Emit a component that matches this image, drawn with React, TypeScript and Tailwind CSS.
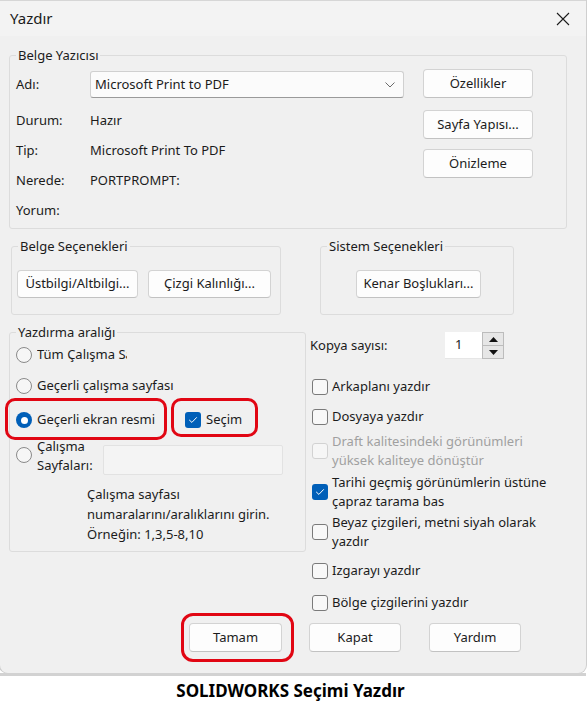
import React from "react";

function Btn({ children, className = "" }: { children: React.ReactNode; className?: string }) {
  return (
    <div
      className={
        "flex items-center justify-center rounded-[4px] border border-[#d3d3d3] border-b-[#c2c2c2] bg-[#fdfdfd] text-[13px] text-[#1b1b1b] " +
        className
      }
    >
      {children}
    </div>
  );
}

function Radio({ on = false }: { on?: boolean }) {
  if (on) {
    return (
      <span className="flex h-4 w-4 shrink-0 items-center justify-center rounded-full bg-[#005fb8]">
        <span className="h-[7px] w-[7px] rounded-full bg-white" />
      </span>
    );
  }
  return <span className="block h-4 w-4 shrink-0 rounded-full border border-[#8a8a8a] bg-[#f6f6f6]" />;
}

function Check({ on = false, disabled = false }: { on?: boolean; disabled?: boolean }) {
  if (on) {
    return (
      <span className="flex h-4 w-4 shrink-0 items-center justify-center rounded-[3px] bg-[#005fb8]">
        <svg width="10" height="8" viewBox="0 0 10 8" fill="none">
          <path d="M1.5 4.2 L3.9 6.4 L8.5 1.6" stroke="white" strokeWidth="1" strokeLinecap="round" strokeLinejoin="round" />
        </svg>
      </span>
    );
  }
  return (
    <span
      className={
        "block h-4 w-4 shrink-0 rounded-[3px] border " +
        (disabled ? "border-[#d2d2d2] bg-[#f6f6f6]" : "border-[#7a7a7a] bg-[#f8f8f8]")
      }
    />
  );
}

function Legend({ children }: { children: React.ReactNode }) {
  return <legend className="ml-[6px] px-[2px] text-[13px] leading-[18px] text-[#1b1b1b]">{children}</legend>;
}

export default function App() {
  return (
    <div className="flex h-[706px] w-[587px] flex-col overflow-hidden bg-white font-['Noto_Sans',sans-serif] text-[13px] text-[#1b1b1b]">
      <div className="flex h-[673px] w-[586px] shrink-0 flex-col rounded-b-[8px] bg-[#f0f0f0] shadow-[0_0_0_1px_#cfcfcf]">
        {/* Title bar */}
        <div className="flex h-[36px] shrink-0 items-center justify-between border-t border-[#d6d6d6] bg-[#f3f3f3] pl-[10px] pr-[16px]">
          <span className="text-[15px] text-[#1b1b1b]">Yazdır</span>
          <svg width="14" height="14" viewBox="0 0 14 14">
            <path d="M1 1 L13 13 M13 1 L1 13" stroke="#1b1b1b" strokeWidth="1.1" />
          </svg>
        </div>

        {/* Belge Yazıcısı */}
        <fieldset className="ml-[9px] mt-[10px] h-[183px] w-[558px] shrink-0 rounded-[3px] border border-[#dcdcdc]">
          <Legend>Belge Yazıcısı</Legend>
          <div className="flex pl-[6px]">
            <div className="flex w-[388px] flex-col">
              <div className="mt-[7px] flex h-[27px] items-center">
                <span className="w-[74px]">Adı:</span>
                <div className="flex h-[27px] w-[314px] items-center justify-between rounded-[3px] border border-[#d0d0d0] border-b-[#9a9a9a] bg-[#fbfbfb] pl-[4px] pr-[8px]">
                  <span>Microsoft Print to PDF</span>
                  <svg width="10" height="6" viewBox="0 0 10 6" fill="none">
                    <path d="M0.5 0.5 L5 5 L9.5 0.5" stroke="#6b6b6b" strokeWidth="1" />
                  </svg>
                </div>
              </div>
              <div className="mt-[8px] flex h-[30px] items-center">
                <span className="w-[74px]">Durum:</span>
                <span>Hazır</span>
              </div>
              <div className="flex h-[30px] items-center">
                <span className="w-[74px]">Tip:</span>
                <span>Microsoft Print To PDF</span>
              </div>
              <div className="flex h-[30px] items-center">
                <span className="w-[74px]">Nerede:</span>
                <span>PORTPROMPT:</span>
              </div>
              <div className="flex h-[30px] items-center">
                <span className="w-[74px]">Yorum:</span>
              </div>
            </div>
            <div className="ml-[19px] flex flex-col">
              <Btn className="mt-[5px] h-[29px] w-[110px]">Özellikler</Btn>
              <Btn className="mt-[12px] h-[29px] w-[110px]">Sayfa Yapısı...</Btn>
              <Btn className="mt-[10px] h-[29px] w-[110px]">Önizleme</Btn>
            </div>
          </div>
        </fieldset>

        {/* Options row */}
        <div className="mt-[8px] flex shrink-0">
          <fieldset className="ml-[11px] h-[78px] w-[270px] rounded-[3px] border border-[#dcdcdc]">
            <Legend>Belge Seçenekleri</Legend>
            <div className="mt-[15px] flex gap-[10px] pl-[5px]">
              <Btn className="h-[28px] w-[121px]">Üstbilgi/Altbilgi...</Btn>
              <Btn className="h-[28px] w-[123px]">Çizgi Kalınlığı...</Btn>
            </div>
          </fieldset>
          <fieldset className="ml-[39px] h-[78px] w-[194px] rounded-[3px] border border-[#dcdcdc]">
            <Legend>Sistem Seçenekleri</Legend>
            <div className="mt-[15px] flex pl-[35px]">
              <Btn className="h-[28px] w-[125px]">Kenar Boşlukları...</Btn>
            </div>
          </fieldset>
        </div>

        {/* Range + options */}
        <div className="mt-[8px] flex h-[291px] shrink-0 items-start">
          <fieldset className="ml-[9px] h-[229px] w-[297px] rounded-[3px] border border-[#dcdcdc]">
            <Legend>Yazdırma aralığı</Legend>
            <div className="flex flex-col pl-[6px]">
              <div className="mt-[2px] flex h-[24px] items-center">
                <Radio />
                <span className="ml-[5px] w-[90px] overflow-hidden whitespace-nowrap">Tüm Çalışma Sayfaları</span>
              </div>
              <div className="mt-[7px] flex h-[24px] items-center">
                <Radio />
                <span className="ml-[5px] whitespace-nowrap">Geçerli çalışma sayfası</span>
              </div>
              <div className="relative mt-[10px] flex h-[24px] items-center">
                <Radio on />
                <span className="ml-[5px] w-[148px] whitespace-nowrap">Geçerli ekran resmi</span>
                <Check on />
                <span className="ml-[5px]">Seçim</span>
                <span className="absolute left-[-11px] top-[-10px] h-[42px] w-[162px] rounded-[10px] border-[3px] border-[#e10613]" />
                <span className="absolute left-[155px] top-[-10px] h-[39px] w-[87px] rounded-[10px] border-[3px] border-[#e10613]" />
              </div>
              <div className="mt-[5px] flex items-start">
                <span className="mt-[10px] flex">
                  <Radio />
                </span>
                <span className="ml-[5px] w-[66px] leading-[19px]">
                  Çalışma
                  <br />
                  Sayfaları:
                </span>
                <span className="mt-[8px] h-[30px] w-[180px] rounded-[2px] border border-[#e2e2e2] bg-[#f4f4f4]" />
              </div>
              <div className="ml-[71px] mt-[9px] leading-[20px]">
                Çalışma sayfası
                <br />
                numaralarını/aralıklarını girin.
                <br />
                Örneğin: 1,3,5-8,10
              </div>
            </div>
          </fieldset>

          <div className="ml-[4px] flex flex-col">
            <div className="mt-[9px] flex h-[27px] items-center">
              <span className="w-[135px]">Kopya sayısı:</span>
              <span className="flex h-[27px] w-[37px] items-center border-b border-[#e6e6e6] bg-white pl-[10px]">1</span>
              <span className="flex h-[27px] w-[22px] flex-col border border-[#bcbcbc] bg-[#e6e6e6]">
                <span className="flex flex-1 items-center justify-center border-b border-[#bcbcbc]">
                  <svg width="9" height="5" viewBox="0 0 9 5">
                    <path d="M0 5 L4.5 0 L9 5 Z" fill="#111" />
                  </svg>
                </span>
                <span className="flex flex-1 items-center justify-center">
                  <svg width="9" height="5" viewBox="0 0 9 5">
                    <path d="M0 0 L4.5 5 L9 0 Z" fill="#111" />
                  </svg>
                </span>
              </span>
            </div>

            <div className="ml-[2px] mt-[16px] flex h-[24px] items-center">
              <Check />
              <span className="ml-[4px]">Arkaplanı yazdır</span>
            </div>
            <div className="ml-[2px] mt-[6px] flex h-[24px] items-center">
              <Check />
              <span className="ml-[4px]">Dosyaya yazdır</span>
            </div>
            <div className="ml-[2px] mt-[3px] flex items-center">
              <Check disabled />
              <span className="ml-[4px] whitespace-nowrap leading-[19px] text-[#a0a0a0]">
                Draft kalitesindeki görünümleri
                <br />
                yüksek kaliteye dönüştür
              </span>
            </div>
            <div className="ml-[2px] mt-[3px] flex items-center">
              <Check on />
              <span className="ml-[4px] whitespace-nowrap leading-[18.5px]">
                Tarihi geçmiş görünümlerin üstüne
                <br />
                çapraz tarama bas
              </span>
            </div>
            <div className="ml-[2px] mt-[3px] flex items-center">
              <Check />
              <span className="ml-[4px] whitespace-nowrap leading-[19px]">
                Beyaz çizgileri, metni siyah olarak
                <br />
                yazdır
              </span>
            </div>
            <div className="ml-[2px] mt-[8px] flex h-[24px] items-center">
              <Check />
              <span className="ml-[4px]">Izgarayı yazdır</span>
            </div>
            <div className="ml-[2px] mt-[8px] flex h-[24px] items-center">
              <Check />
              <span className="ml-[4px]">Bölge çizgilerini yazdır</span>
            </div>
          </div>
        </div>

        {/* Bottom buttons */}
        <div className="mt-[9px] flex shrink-0">
          <div className="relative ml-[189px]">
            <Btn className="h-[29px] w-[93px] border-[#3f8ad6] border-b-[#3f8ad6]">Tamam</Btn>
            <span className="absolute left-[-8px] top-[-10px] h-[49px] w-[113px] rounded-[12px] border-[3px] border-[#e10613]" />
          </div>
          <Btn className="ml-[27px] h-[29px] w-[92px]">Kapat</Btn>
          <Btn className="ml-[28px] h-[29px] w-[92px]">Yardım</Btn>
        </div>
      </div>

      <div className="h-[3px] w-[586px] shrink-0 bg-[#d2d2d2]" />
      <div className="flex flex-1 items-center justify-center pr-[6px]">
        <span className="text-[17px] font-bold text-black">SOLIDWORKS Seçimi Yazdır</span>
      </div>
    </div>
  );
}
